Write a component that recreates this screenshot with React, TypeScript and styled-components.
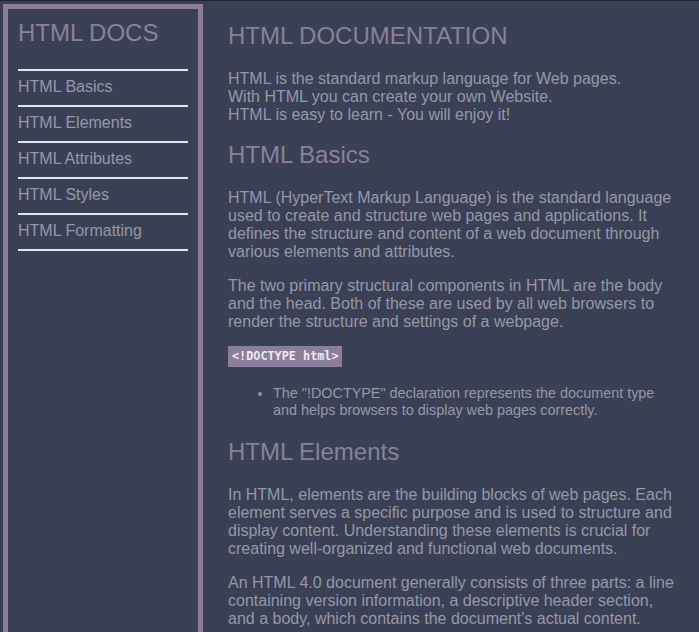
import React from "react";
import styled, { createGlobalStyle } from "styled-components";

const Global = createGlobalStyle`
  html, body { margin: 0; padding: 0; }
  body {
    background: #3a4055;
    border-top: 1px solid #1d2030;
    font-family: Arial, "Liberation Sans", Helvetica, sans-serif;
    color: #9698a8;
  }
`;

const Page = styled.div`
  display: flex;
  align-items: stretch;
  padding: 3px 0 0 3px;
  min-height: 100vh;
  box-sizing: border-box;
`;

const Sidebar = styled.nav`
  flex: 0 0 200px;
  width: 200px;
  box-sizing: border-box;
  border: 5px solid #8c7d9b;
  padding: 10px;
  background: #3a4055;
`;

const SideTitle = styled.h2`
  margin: 0 0 22px;
  font-size: 24px;
  line-height: 28px;
  font-weight: normal;
  color: #8a809e;
`;

const NavList = styled.ul`
  list-style: none;
  margin: 0;
  padding: 0;
  border-top: 2px solid #e1e7f0;
`;

const NavItem = styled.li`
  padding: 7px 0 9px;
  font-size: 16px;
  line-height: 18px;
  color: #9598a9;
  border-bottom: 2px solid #e1e7f0;
`;

const Main = styled.main`
  flex: 1;
  padding: 0 20px 0 25px;
  min-width: 0;
`;

const Title = styled.h1<{ $top?: number }>`
  margin: ${(p) => p.$top ?? 17}px 0 20px;
  font-size: 24px;
  line-height: 28px;
  font-weight: normal;
  color: #8a809e;
`;

const Para = styled.p`
  margin: 16px 0;
  font-size: 16px;
  line-height: 18px;
  color: #9698a8;
`;

const Code = styled.code`
  display: block;
  width: fit-content;
  margin: -1px 0 0;
  padding: 3px 3px 3px 4px;
  background: #8c7d9b;
  color: #eeeaf3;
  font-family: "DejaVu Sans Mono", "Liberation Mono", monospace;
  font-weight: bold;
  font-size: 11.8px;
  line-height: 15px;
`;

const Bullets = styled.ul`
  margin: 18px 0 19px;
  padding-left: 45px;
  font-size: 14.4px;
  line-height: 17px;
  color: #9698a8;
`;

const navItems = [
  "HTML Basics",
  "HTML Elements",
  "HTML Attributes",
  "HTML Styles",
  "HTML Formatting",
];

export default function App() {
  return (
    <>
      <Global />
      <Page>
        <Sidebar>
          <SideTitle>HTML DOCS</SideTitle>
          <NavList>
            {navItems.map((n) => (
              <NavItem key={n}>{n}</NavItem>
            ))}
          </NavList>
        </Sidebar>
        <Main>
          <Title $top={18}>HTML DOCUMENTATION</Title>
          <Para>
            HTML is the standard markup language for Web pages.
            <br />
            With HTML you can create your own Website.
            <br />
            HTML is easy to learn - You will enjoy it!
          </Para>
          <Title>HTML Basics</Title>
          <Para>
            HTML (HyperText Markup Language) is the standard language used to
            create and structure web pages and applications. It defines the
            structure and content of a web document through various elements
            and attributes.
          </Para>
          <Para>
            The two primary structural components in HTML are the body and the
            head. Both of these are used by all web browsers to render the
            structure and settings of a webpage.
          </Para>
          <Code>&lt;!DOCTYPE html&gt;</Code>
          <Bullets>
            <li>
              The "!DOCTYPE" declaration represents the document type and helps
              browsers to display web pages correctly.
            </li>
          </Bullets>
          <Title>HTML Elements</Title>
          <Para>
            In HTML, elements are the building blocks of web pages. Each
            element serves a specific purpose and is used to structure and
            display content. Understanding these elements is crucial for
            creating well-organized and functional web documents.
          </Para>
          <Para>
            An HTML 4.0 document generally consists of three parts: a line
            containing version information, a descriptive header section, and a
            body, which contains the document's actual content.
          </Para>
        </Main>
      </Page>
    </>
  );
}
